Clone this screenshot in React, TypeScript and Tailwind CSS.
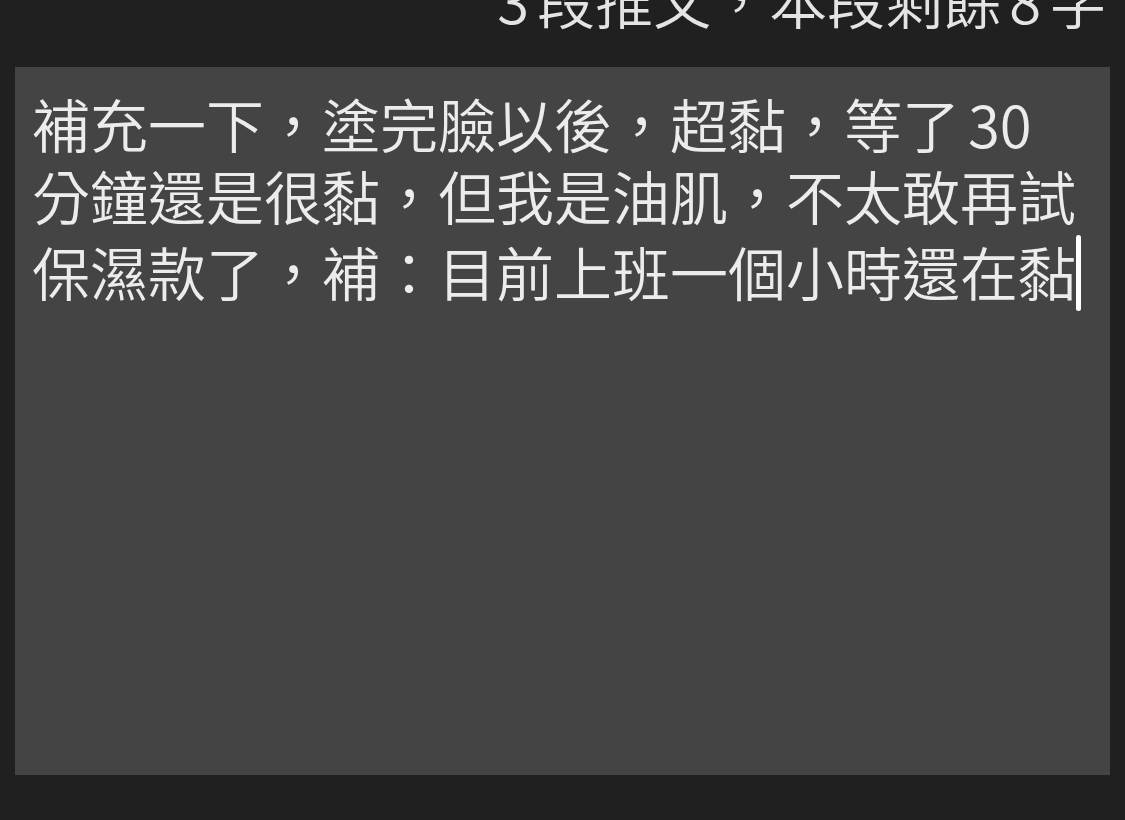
export default function App() {
  const font = { fontFamily: '"Noto Sans CJK TC", "Noto Sans", sans-serif' };
  return (
    <div className="w-[1125px] h-[820px] bg-[#202020] flex flex-col overflow-hidden" style={font}>
      {/* counter, scrolled partly out of view */}
      <div className="h-[67px] shrink-0 overflow-hidden flex justify-end pr-[18px]">
        <div className="mt-[-37px] text-[58px] leading-[72px] font-[350] text-[#e4e4e4] whitespace-nowrap">
          3<span className="ml-[8px]">段推文，本段剩餘</span>
          <span className="ml-[8px] mr-[8px]">8</span>字
        </div>
      </div>

      {/* editor */}
      <div className="mx-[15px] w-[1095px] h-[708px] bg-[#444444] pl-[17px] pr-[18px] pt-[20px]">
        <div className="text-[58px] leading-[72px] font-[350] text-[#ececec]">
          <div className="whitespace-nowrap">
            補充一下，塗完臉以後，超黏，等了<span className="ml-[8px]">30</span>
          </div>
          <div className="whitespace-nowrap">分鐘還是很黏，但我是油肌，不太敢再試</div>
          <div className="whitespace-nowrap flex items-center">
            <span>保濕款了，補：目前上班一個小時還在黏</span>
            <span className="inline-block w-[5px] h-[76px] bg-white rounded-full mt-[4px]" />
          </div>
        </div>
      </div>
    </div>
  );
}
